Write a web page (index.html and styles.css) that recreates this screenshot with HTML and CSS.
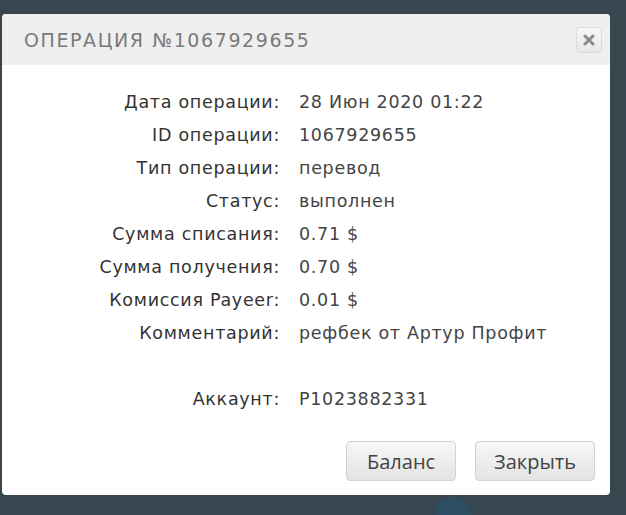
FILE: index.html
```html
<!DOCTYPE html>
<html lang="ru">
<head>
    <meta charset="UTF-8">
    <title>Операция</title>
    <link rel="stylesheet" href="styles.css">
</head>
<body>
    <div class="modal">
        <div class="modal-header">
            <span class="modal-title">Операция №1067929655</span>
            <button class="close-btn" title="Закрыть">
                <svg width="12" height="12" viewBox="0 0 12 12"><path d="M2 2 L10 10 M10 2 L2 10" stroke="#8a8a8a" stroke-width="3" stroke-linecap="round"/></svg>
            </button>
        </div>
        <div class="modal-body">
            <div class="info">
                <span class="label">Дата операции:</span><span class="value">28 Июн 2020 01:22</span>
                <span class="label">ID операции:</span><span class="value">1067929655</span>
                <span class="label">Тип операции:</span><span class="value">перевод</span>
                <span class="label">Статус:</span><span class="value">выполнен</span>
                <span class="label">Сумма списания:</span><span class="value">0.71 $</span>
                <span class="label">Сумма получения:</span><span class="value">0.70 $</span>
                <span class="label">Комиссия Payeer:</span><span class="value">0.01 $</span>
                <span class="label">Комментарий:</span><span class="value">рефбек от Артур Профит</span>
                <span class="label"></span><span class="value"></span>
                <span class="label">Аккаунт:</span><span class="value">P1023882331</span>
            </div>
        </div>
        <div class="modal-footer">
            <button class="btn">Баланс</button>
            <button class="btn">Закрыть</button>
        </div>
    </div>
    <div class="bottom-badge"></div>
</body>
</html>
```

FILE: styles.css
```css
body {
    margin: 0;
    padding: 14px 0 0 2px;
    background-color: #37464f;
    font-family: "DejaVu Sans", sans-serif;
    height: 515px;
    box-sizing: border-box;
    overflow: hidden;
    position: relative;
}
.modal {
    width: 608px;
    background-color: #fff;
    border-radius: 4px;
    overflow: hidden;
}
.modal-header {
    background-color: #efefef;
    height: 51px;
    display: flex;
    align-items: center;
    justify-content: space-between;
    padding: 0 8px 0 22px;
}
.modal-title {
    font-family: "DejaVu Sans", sans-serif;
    font-size: 19px;
    letter-spacing: 1.6px;
    text-transform: uppercase;
    color: #7a7a7a;
}
.close-btn {
    width: 26px;
    height: 26px;
    padding: 0;
    border: 1px solid #dcdcdc;
    border-radius: 4px;
    background: linear-gradient(#f6f6f6, #e9e9e9);
    display: flex;
    align-items: center;
    justify-content: center;
}
.modal-body {
    padding: 20px 0 18px 0;
}
.info {
    display: grid;
    grid-template-columns: 278px 1fr;
    column-gap: 19px;
    grid-auto-rows: 33px;
    align-items: center;
    font-size: 17.5px;
    letter-spacing: 0.7px;
}
.label {
    text-align: right;
    color: #333;
}
.value {
    color: #444;
}
.modal-footer {
    display: flex;
    justify-content: flex-end;
    gap: 19px;
    padding: 8px 15px 14px 0;
}
.btn {
    font-family: "Open Sans", sans-serif;
    font-size: 20px;
    color: #444;
    height: 40px;
    min-width: 110px;
    padding: 0 18px;
    border: 1px solid #d2d2d2;
    border-radius: 4px;
    background: linear-gradient(#f7f7f7, #e4e4e4);
    cursor: pointer;
}
.bottom-badge {
    position: absolute;
    left: 434px;
    top: 497px;
    width: 38px;
    height: 38px;
    border-radius: 50%;
    background-color: #2d4d63;
}
```
